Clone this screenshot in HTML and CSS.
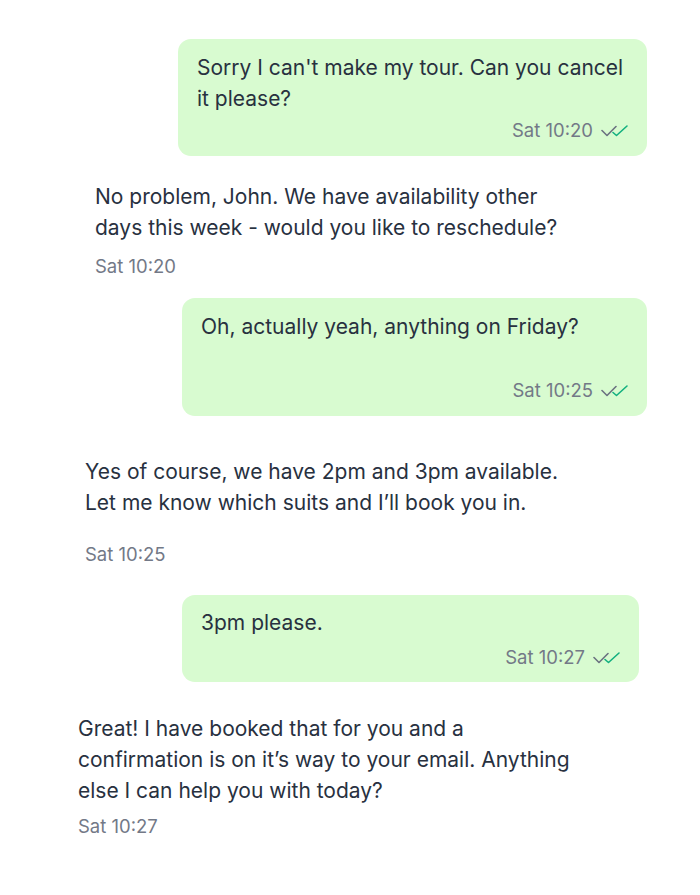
FILE: index.html
```html
<!DOCTYPE html>
<html lang="en">
<head>
<meta charset="utf-8">
<title>Chat</title>
<link rel="stylesheet" href="styles.css">
</head>
<body>
<main class="chat">
  <div class="out out-1">
    <p class="text">Sorry I can't make my tour. Can you cancel it please?</p>
    <div class="meta meta-1"><span class="time">Sat 10:20</span>
      <svg class="ticks" viewBox="0 0 30 13" width="30" height="13"><path d="M1 6.5 L6 11.5 L15 2.5" class="t-gray"/><path d="M12 8.5 L15.5 11.5 L26 2" class="t-green"/></svg>
    </div>
  </div>

  <div class="in in-1">
    <p class="text">No problem, John. We have availability other days this week - would you like to reschedule?</p>
    <div class="time">Sat 10:20</div>
  </div>

  <div class="out out-2">
    <p class="text">Oh, actually yeah, anything on Friday?</p>
    <div class="meta meta-2"><span class="time">Sat 10:25</span>
      <svg class="ticks" viewBox="0 0 30 13" width="30" height="13"><path d="M1 6.5 L6 11.5 L15 2.5" class="t-gray"/><path d="M12 8.5 L15.5 11.5 L26 2" class="t-green"/></svg>
    </div>
  </div>

  <div class="in in-2">
    <p class="text">Yes of course, we have 2pm and 3pm available. Let me know which suits and I’ll book you in.</p>
    <div class="time">Sat 10:25</div>
  </div>

  <div class="out out-3">
    <p class="text">3pm please.</p>
    <div class="meta meta-3"><span class="time">Sat 10:27</span>
      <svg class="ticks" viewBox="0 0 30 13" width="30" height="13"><path d="M1 6.5 L6 11.5 L15 2.5" class="t-gray"/><path d="M12 8.5 L15.5 11.5 L26 2" class="t-green"/></svg>
    </div>
  </div>

  <div class="in in-3">
    <p class="text">Great! I have booked that for you and a confirmation is on it’s way to your email. Anything else I can help you with today?</p>
    <div class="time">Sat 10:27</div>
  </div>
</main>
</body>
</html>
```

FILE: styles.css
```css
html, body {
  margin: 0;
  padding: 0;
  background: #ffffff;
}

body {
  font-family: Inter, "Liberation Sans", sans-serif;
  color: #28313f;
  width: 700px;
  height: 895px;
  overflow: hidden;
}

.chat {
  display: flex;
  flex-direction: column;
  padding-top: 39px;
}

.text {
  margin: 0;
  font-size: 21px;
  line-height: 31px;
}

.time {
  font-size: 18.5px;
  line-height: 22px;
  color: #737987;
}

/* outgoing bubbles */
.out {
  align-self: flex-start;
  box-sizing: border-box;
  background: #d8fbd0;
  border-radius: 13px;
  padding: 13px 21px 15px 19px;
}

.out-1 { margin-left: 178px; width: 469px; }
.out-2 { margin-left: 182px; width: 465px; margin-top: 21px; }
.out-3 { margin-left: 182px; width: 457px; margin-top: 30px; padding-top: 12px; padding-bottom: 14px; }

.meta {
  display: flex;
  justify-content: flex-end;
  align-items: center;
  gap: 8px;
  margin-top: 5px;
}

.meta-2 { margin-top: 37px; }
.meta-3 { margin-top: 8px; }

.ticks {
  display: block;
  fill: none;
  stroke-width: 1.6;
  stroke-linecap: round;
  stroke-linejoin: round;
  margin-right: -5px;
}

.t-gray { stroke: #6b7280; }
.t-green { stroke: #13b07f; }

/* incoming messages */
.in {
  align-self: flex-start;
}

.in .time { margin-top: 12px; }

.in-1 { margin-left: 95px; max-width: 475px; margin-top: 25px; }
.in-2 { margin-left: 85px; max-width: 480px; margin-top: 40px; }
.in-2 .time { margin-top: 25px; }
.in-3 { margin-left: 78px; max-width: 500px; margin-top: 31px; }
.in-3 .time { margin-top: 9px; }
```
